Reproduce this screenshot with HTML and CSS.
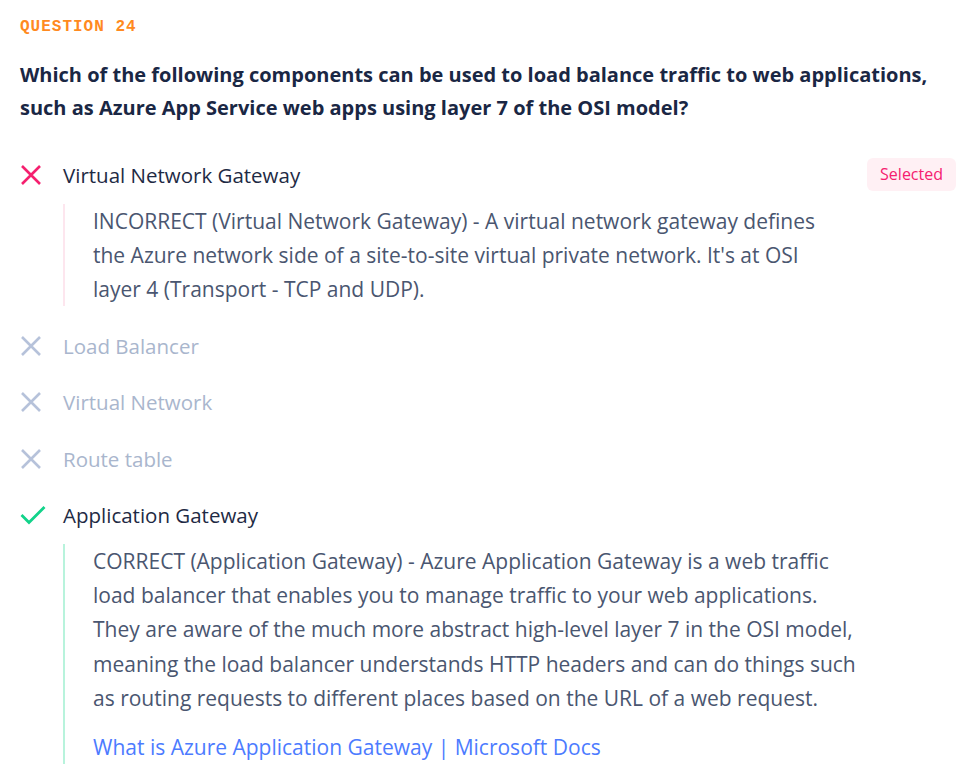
FILE: index.html
```html
<!DOCTYPE html>
<html>
<head>
<meta charset="utf-8">
<link rel="stylesheet" href="styles.css">
</head>
<body>
<div class="page">
  <div class="qnum">QUESTION 24</div>
  <h2 class="qtext">Which of the following components can be used to load balance traffic to web applications, such as Azure App Service web apps using layer 7 of the OSI model?</h2>
  <ul class="options">
    <li class="option wrong selected">
      <span class="icon">
        <svg width="22" height="22" viewBox="0 0 22 22"><path d="M2 2 L20 20 M20 2 L2 20" stroke="currentColor" stroke-width="2.6" fill="none"/></svg>
      </span>
      <div class="body">
        <div class="label">Virtual Network Gateway</div>
        <div class="explain">
          <p>INCORRECT (Virtual Network Gateway) - A virtual network gateway defines the Azure network side of a site-to-site virtual private network. It's at OSI layer 4 (Transport - TCP and UDP).</p>
        </div>
      </div>
      <span class="badge">Selected</span>
    </li>
    <li class="option muted">
      <span class="icon">
        <svg width="22" height="22" viewBox="0 0 22 22"><path d="M2 2 L20 20 M20 2 L2 20" stroke="currentColor" stroke-width="2.6" fill="none"/></svg>
      </span>
      <div class="body"><div class="label">Load Balancer</div></div>
    </li>
    <li class="option muted">
      <span class="icon">
        <svg width="22" height="22" viewBox="0 0 22 22"><path d="M2 2 L20 20 M20 2 L2 20" stroke="currentColor" stroke-width="2.6" fill="none"/></svg>
      </span>
      <div class="body"><div class="label">Virtual Network</div></div>
    </li>
    <li class="option muted">
      <span class="icon">
        <svg width="22" height="22" viewBox="0 0 22 22"><path d="M2 2 L20 20 M20 2 L2 20" stroke="currentColor" stroke-width="2.6" fill="none"/></svg>
      </span>
      <div class="body"><div class="label">Route table</div></div>
    </li>
    <li class="option correct">
      <span class="icon">
        <svg width="26" height="20" viewBox="0 0 26 20"><path d="M1.5 10 L9 17.5 L24.5 2" stroke="currentColor" stroke-width="2.8" fill="none"/></svg>
      </span>
      <div class="body">
        <div class="label">Application Gateway</div>
        <div class="explain">
          <p>CORRECT (Application Gateway) - Azure Application Gateway is a web traffic load balancer that enables you to manage traffic to your web applications. They are aware of the much more abstract high-level layer 7 in the OSI model, meaning the load balancer understands HTTP headers and can do things such as routing requests to different places based on the URL of a web request.</p>
          <p><a href="#">What is Azure Application Gateway | Microsoft Docs</a></p>
        </div>
      </div>
    </li>
  </ul>
</div>
</body>
</html>
```
FILE: styles.css
```css
* { box-sizing: border-box; }
html, body { margin: 0; padding: 0; background: #ffffff; }
body {
  font-family: "Open Sans", "Noto Sans", sans-serif;
  color: #1e2a44;
}
.page {
  padding: 15px 4px 0 20px;
}
.qnum {
  font-family: "Liberation Mono", "DejaVu Sans Mono", monospace;
  font-weight: 700;
  font-size: 16px;
  letter-spacing: 1px;
  line-height: 24px;
  color: #ff8a1f;
}
.qtext {
  margin: 19px 0 0 0;
  font-size: 20px;
  font-weight: 700;
  line-height: 33px;
  color: #1a2744;
}
.options {
  list-style: none;
  margin: 34px 0 0 0;
  padding: 0;
  display: flex;
  flex-direction: column;
  gap: 22.5px;
}
.option {
  display: flex;
  align-items: flex-start;
}
.icon {
  width: 43px;
  flex: none;
  height: 34px;
  display: flex;
  align-items: center;
}
.wrong .icon { color: #f5206f; }
.muted .icon { color: #b6c2da; }
.correct .icon { color: #12d38a; }
.body { flex: 1; min-width: 0; }
.label {
  font-size: 20.5px;
  line-height: 34px;
  color: #1e2a44;
}
.muted .label { color: #a9b6cd; }
.explain {
  margin-top: 11.5px;
  padding-left: 28px;
  border-left: 2px solid #fde6ee;
  font-size: 21px;
  line-height: 34.3px;
  color: #4a5670;
  max-width: 803px;
}
.correct .explain { border-left-color: #b8f3dc; }
.explain p { margin: 0; }
.explain p + p { margin-top: 14.5px; }
.explain a { color: #4c7bff; text-decoration: none; }
.badge {
  flex: none;
  margin-left: 16px;
  background: #fff0f4;
  color: #f5206f;
  font-size: 16px;
  line-height: 33px;
  padding: 0 13px;
  border-radius: 6px;
}
```
